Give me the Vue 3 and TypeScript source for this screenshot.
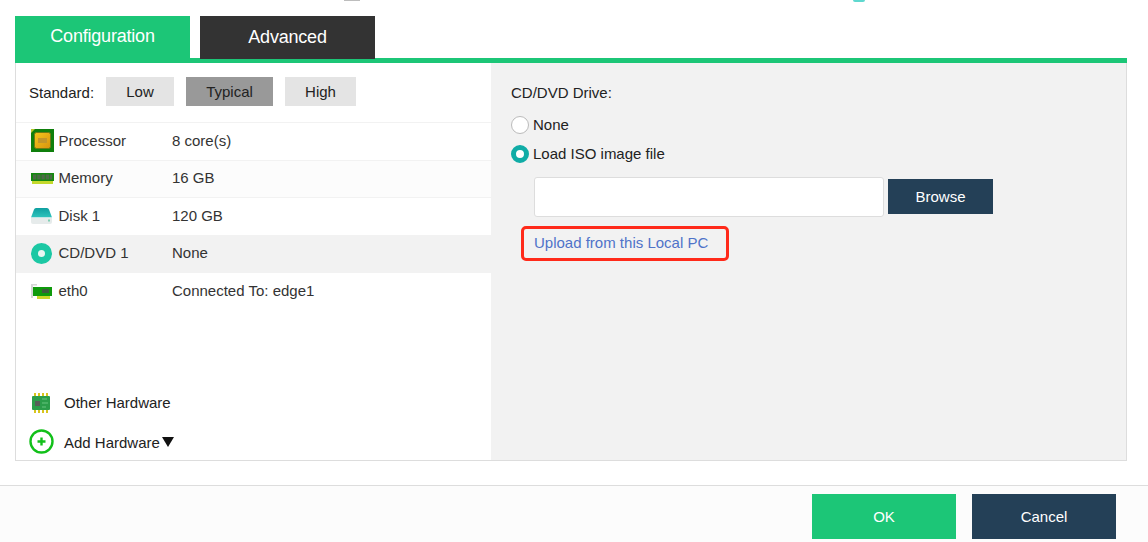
<script setup lang="ts">
const levels = [
  { name: 'Low', active: false },
  { name: 'Typical', active: true },
  { name: 'High', active: false },
]
const rows = [
  { id: 'cpu', name: 'Processor', value: '8 core(s)', selected: false },
  { id: 'mem', name: 'Memory', value: '16 GB', selected: false },
  { id: 'disk', name: 'Disk 1', value: '120 GB', selected: false },
  { id: 'cd', name: 'CD/DVD 1', value: 'None', selected: true },
  { id: 'eth', name: 'eth0', value: 'Connected To: edge1', selected: false },
]
</script>

<template>
  <div class="page">
    <i class="crumb crumb-gray"></i>
    <i class="crumb crumb-teal"></i>
    <div class="main">
      <div class="tabs">
        <div class="tab tab-on">Configuration</div>
        <div class="tab tab-off">Advanced</div>
      </div>
      <div class="panel">
        <section class="left">
          <div class="standard">
            <span class="standard-label">Standard:</span>
            <span v-for="l in levels" :key="l.name" class="level" :class="{ 'level-on': l.active }">{{ l.name }}</span>
          </div>
          <div class="rows">
            <div v-for="r in rows" :key="r.id" class="row" :class="{ 'row-on': r.selected }">
              <span class="row-icon">
                <svg v-if="r.id === 'cpu'" width="23" height="23" viewBox="0 0 23 23">
                  <defs>
                    <linearGradient id="cpuG" x1="0" y1="0" x2="1" y2="1">
                      <stop offset="0" stop-color="#f3c61c" />
                      <stop offset="1" stop-color="#d8930f" />
                    </linearGradient>
                  </defs>
                  <rect width="23" height="23" fill="#0f7f0c" />
                  <path d="M0 0h4L0 4z" fill="#b5c82e" />
                  <rect x="3.5" y="3.5" width="16" height="16" rx="2" fill="url(#cpuG)" stroke="#6f7a14" />
                  <rect x="7" y="9" width="9" height="5" fill="#c3962a" />
                </svg>
                <svg v-else-if="r.id === 'mem'" width="23" height="11" viewBox="0 0 23 11">
                  <rect width="23" height="8" fill="#14890f" />
                  <rect x="2" y="1.5" width="3.4" height="5" fill="#4c6b46" />
                  <rect x="6.2" y="1.5" width="3.4" height="5" fill="#4c6b46" />
                  <rect x="10.4" y="1.5" width="3.4" height="5" fill="#4c6b46" />
                  <rect x="14.6" y="1.5" width="3.4" height="5" fill="#4c6b46" />
                  <rect x="18.6" y="1.5" width="2.6" height="5" fill="#4c6b46" />
                  <rect x="1" y="8" width="21" height="3" fill="#c4d92c" />
                </svg>
                <svg v-else-if="r.id === 'disk'" width="21" height="16" viewBox="0 0 21 16">
                  <defs>
                    <linearGradient id="diskG" x1="0" y1="0" x2="0" y2="1">
                      <stop offset="0" stop-color="#0f9fa0" />
                      <stop offset="1" stop-color="#2ec4bd" />
                    </linearGradient>
                  </defs>
                  <path d="M5 0h11q1.500 0 2 1.500L21 9.500H0L3 1.500Q3.500 0 5 0z" fill="url(#diskG)" />
                  <path d="M0 9.500h21V14q0 2-2 2H2q-2 0-2-2z" fill="#e6ebeb" />
                  <rect x="17" y="11.500" width="2" height="2" fill="#7fd0b4" />
                </svg>
                <svg v-else-if="r.id === 'cd'" width="21" height="21" viewBox="0 0 21 21">
                  <circle cx="10.5" cy="10.5" r="3.500" fill="#eaf6f2" />
                  <circle cx="10.5" cy="10.5" r="7" fill="none" stroke="#1cc8a4" stroke-width="7" />
                </svg>
                <svg v-else width="21" height="15" viewBox="0 0 21 15">
                  <path d="M0 0h6v1.500H2V14H0z" fill="#d6d6d6" />
                  <rect x="2" y="3" width="19" height="9" fill="#0f9a0c" />
                  <rect x="11" y="5" width="7" height="4" fill="#3c5c3c" />
                  <rect x="6" y="12" width="13" height="3" fill="#c9d82a" />
                </svg>
              </span>
              <span class="row-name">{{ r.name }}</span>
              <span class="row-value">{{ r.value }}</span>
            </div>
          </div>
          <div class="extras">
            <div class="extra">
              <span class="extra-icon">
                <svg width="18" height="20" viewBox="0 0 18 20">
                  <g fill="#d8c51d">
                    <rect x="2" y="0" width="2" height="20" />
                    <rect x="6" y="0" width="2" height="20" />
                    <rect x="10" y="0" width="2" height="20" />
                    <rect x="14" y="0" width="2" height="20" />
                  </g>
                  <rect x="0" y="3" width="18" height="14" rx="1" fill="#2b9d4a" />
                  <rect x="3" y="8" width="5" height="5" fill="#555f58" />
                  <path d="M10 6h5M10 10h6M10 14h4" stroke="#66c47f" fill="none" />
                </svg>
              </span>
              <span class="extra-text">Other Hardware</span>
            </div>
            <div class="extra extra-add">
              <span class="extra-icon">
                <svg width="25" height="25" viewBox="0 0 25 25">
                  <circle cx="12.5" cy="12.5" r="11" fill="#fff" stroke="#12c01a" stroke-width="2.4" />
                  <path d="M12.5 8.5v8M8.5 12.5h8" stroke="#12c01a" stroke-width="2.4" />
                </svg>
              </span>
              <span class="add-text">Add Hardware</span>
              <span class="caret"></span>
            </div>
          </div>
        </section>
        <section class="right">
          <div class="drive-title">CD/DVD Drive:</div>
          <label class="radio-line">
            <span class="radio"></span>
            <span class="radio-text">None</span>
          </label>
          <label class="radio-line radio-line-second">
            <span class="radio radio-on"></span>
            <span class="radio-text">Load ISO image file</span>
          </label>
          <div class="file-line">
            <div class="file-input"></div>
            <button class="browse" type="button">Browse</button>
          </div>
          <div class="upload"><a class="upload-link">Upload from this Local PC</a></div>
        </section>
      </div>
    </div>
    <footer class="footer">
      <button class="action ok" type="button">OK</button>
      <button class="action cancel" type="button">Cancel</button>
    </footer>
  </div>
</template>

<style>
html, body { margin: 0; background: #fff; }
</style>

<style scoped>
.page {
  position: relative;
  width: 1148px;
  height: 542px;
  overflow: hidden;
  background: #fff;
  font-family: "Liberation Sans", Arial, sans-serif;
  font-size: 15px;
  color: #222;
  display: flex;
  flex-direction: column;
}
.crumb { position: absolute; top: 0; height: 1px; }
.crumb-gray { left: 344px; width: 16px; background: #bdbdbd; }
.crumb-teal { left: 853px; width: 12px; height: 2px; border-radius: 0 0 6px 6px; background: #5fd8cf; }
.main { padding: 16px 21px 0 15px; height: 485px; flex: none; box-sizing: border-box; }
.tabs { display: flex; gap: 10px; height: 47px; border-bottom: 5px solid #1cc677; box-sizing: border-box; }
.tab {
  width: 175px;
  height: 42px;
  display: flex;
  align-items: center;
  justify-content: center;
  color: #fff;
  font-size: 18px;
  letter-spacing: -0.2px;
  padding-bottom: 1px;
  box-sizing: border-box;
}
.tab-on { background: #1cc677; height: 42px; }
.tab-off { background: #333; height: 43px; }
.panel {
  display: flex;
  height: 398px;
  border: 1px solid #ddd;
  border-top: 0;
  box-sizing: border-box;
}
.left { width: 475px; display: flex; flex-direction: column; background: #fff; }
.standard {
  height: 60px;
  display: flex;
  align-items: center;
  padding: 0 0 2px 13px;
  box-sizing: border-box;
  border-bottom: 1px solid #f2f2f2;
}
.standard-label { width: 77px; padding-top: 1px; }
.level {
  height: 29px;
  margin-right: 12px;
  display: flex;
  align-items: center;
  justify-content: center;
  background: #e4e4e4;
  width: 68px;
}
.level:nth-child(3) { width: 87px; }
.level:nth-child(4) { width: 71px; }
.level-on { background: #999; }
.rows { display: flex; flex-direction: column; }
.row {
  height: 37.5px;
  display: flex;
  align-items: center;
  box-sizing: border-box;
  border-bottom: 1px solid #f2f2f2;
  color: #333;
  background: #fff;
}
.row:nth-child(even) { background: #fcfcfc; }
.row:last-child { border-bottom: 0; }
.row-on, .row-on:nth-child(even) { background: #f2f2f2; }
.row-icon { width: 43px; padding: 0 0 1px 15px; box-sizing: border-box; display: flex; justify-content: flex-start; flex: none; }
.row-name { width: 113.5px; margin-left: -0.5px; padding-bottom: 2px; }
.row-value { flex: 1; padding-bottom: 2px; }
.extras { margin-top: auto; }
.extra {
  display: flex;
  align-items: center;
  height: 40px;
  color: #222;
}
.extra-text { padding-bottom: 2px; }
.add-text { padding-top: 1px; }
.extra-icon { width: 48px; display: flex; justify-content: center; padding-left: 2px; box-sizing: border-box; flex: none; }
.extra-add { height: 37px; }
.caret {
  width: 0;
  height: 0;
  margin-left: 2px;
  margin-top: 1px;
  border-left: 6px solid transparent;
  border-right: 6px solid transparent;
  border-top: 10px solid #111;
}
.right {
  flex: 1;
  background: #f2f2f2;
  padding: 21px 0 0 20px;
  color: #222;
}
.drive-title { height: 17px; line-height: 17px; }
.radio-line { display: flex; align-items: center; height: 20px; margin-top: 14px; }
.radio-line-second { margin-top: 9px; }
.radio-text { padding-bottom: 2px; }
.radio {
  width: 18px;
  height: 18px;
  border-radius: 50%;
  background: #fff;
  border: 1px solid #bbb;
  box-sizing: border-box;
  margin-right: 4px;
}
.radio-on { border: 5px solid #10aca6; }
.file-line { display: flex; align-items: flex-start; margin: 13px 0 0 23px; }
.file-input {
  width: 350px;
  height: 40px;
  box-sizing: border-box;
  border: 1px solid #ddd;
  border-radius: 3px;
  background: #fff;
}
.browse {
  width: 105px;
  height: 35px;
  margin: 2px 0 0 4px;
  border: 0;
  background: #244057;
  color: #fff;
  font: inherit;
}
.upload {
  width: 208px;
  height: 35px;
  margin: 9px 0 0 10px;
  border: 3px solid #ff2a1a;
  border-radius: 5px;
  box-sizing: border-box;
  padding: 0 0 2px 10px;
  display: flex;
  align-items: center;
}
.upload-link { color: #4f73c9; }
.footer {
  height: 57px;
  flex: none;
  box-sizing: border-box;
  border-top: 1px solid #ddd;
  background: #fcfcfc;
  display: flex;
  justify-content: flex-end;
  gap: 16px;
  padding: 8px 32px 0 0;
}
.action {
  width: 144px;
  height: 45px;
  border: 0;
  color: #fff;
  font: inherit;
  padding-bottom: 2px;
}
.ok { background: #1cc677; }
.cancel { background: #244057; }
</style>
